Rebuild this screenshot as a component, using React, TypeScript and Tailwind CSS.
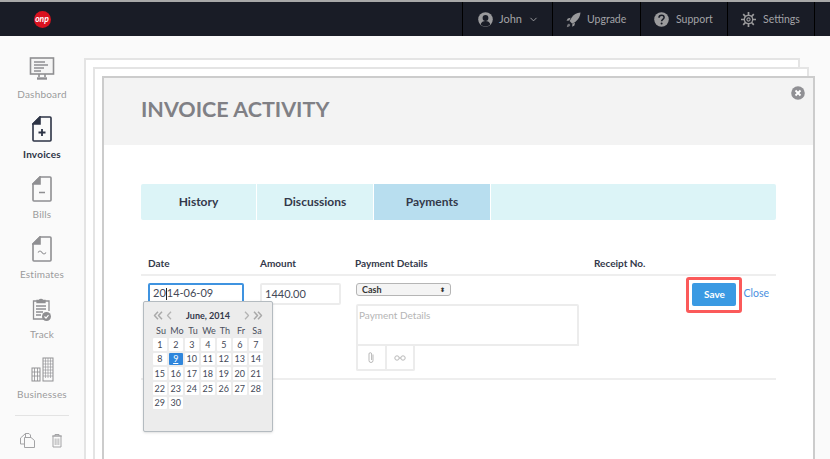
import React from "react";
import { ChevronDown } from "lucide-react";

const font = "font-['Lato','Open_Sans',sans-serif]";

const Gray = "#8f8f92";

const DashboardIcon = () => (
  <svg width="26" height="24" viewBox="0 0 26 24" fill="none" stroke={Gray} strokeWidth="1.6">
    <rect x="1.5" y="1" width="23" height="16" fill="#f5f5f5" />
    <path d="M5 5h11M5 8h14M5 11h10M5 14h7" strokeWidth="1.3" />
    <path d="M10 17v3M16 17v3" />
    <path d="M8 21.5h10" strokeWidth="2.4" />
  </svg>
);

const DocIcon = ({ color, sign }: { color: string; sign: "plus" | "minus" | "tilde" }) => (
  <svg width="20" height="26" viewBox="0 0 20 26" fill="none" stroke={color} strokeWidth="1.6">
    <path d="M8 1h10a1 1 0 0 1 1 1v22a1 1 0 0 1-1 1H2a1 1 0 0 1-1-1V8z" />
    <path d="M8 1v7H1z" fill={color} />
    {sign === "plus" && <path d="M10 13v7M6.500 16.500h7" strokeWidth="1.800" />}
    {sign === "minus" && <path d="M7 16.500h6" strokeWidth="1.500" />}
    {sign === "tilde" && <path d="M6 16.500c1.500-2 2.500-2 4 0s2.500 2 4 0" strokeWidth="1.100" />}
  </svg>
);

const TrackIcon = () => (
  <svg width="20" height="25" viewBox="0 0 20 25" fill="none" stroke={Gray} strokeWidth="1.300">
    <path d="M5 4H1.500v18h11" />
    <path d="M13 4h4v10" />
    <path d="M5 5.500V3.500h2.200a2 2 0 0 1 3.600 0H13v2z" fill={Gray} />
    <path d="M4 9h10M4 12h10M4 15h7M4 18h5" />
    <circle cx="14.500" cy="19.500" r="4.500" fill={Gray} stroke="none" />
    <path d="M12.500 19.500l1.500 1.600 2.500-3" stroke="#fff" strokeWidth="1.100" />
  </svg>
);

const BusinessIcon = () => (
  <svg width="23" height="25" viewBox="0 0 23 25" fill="none" stroke={Gray} strokeWidth="1">
    <rect x="1" y="11" width="8" height="13" />
    <path d="M3.500 11v13M6.500 11v13M1 15h8M1 19h8" strokeWidth="0.800" />
    <rect x="12" y="1" width="10" height="23" />
    <path d="M14.500 1v20M17 1v20M19.500 1v20M12 4h10M12 7h10M12 10h10M12 13h10M12 16h10M12 19h10" strokeWidth="0.600" />
  </svg>
);

const CopyIcon = () => (
  <svg width="15" height="15" viewBox="0 0 15 15" fill="none" stroke="#a3a3a5" strokeWidth="1">
    <path d="M5.500 4.500V.5H9l1.500 1.500v2.500" />
    <path d="M5.500.5L.5 5v6h4" />
    <path d="M4.500 4.500H11l3.500 3v7h-10z" fill="#fafafa" />
  </svg>
);

const TrashIcon = () => (
  <svg width="12" height="15" viewBox="0 0 12 15" fill="none" stroke="#a3a3a5" strokeWidth="1">
    <path d="M1 3h10M4 3V1.500h4V3" />
    <path d="M2 3v11h8V3z" />
    <path d="M4.200 5.500v6.500M6 5.500v6.500M7.800 5.500v6.500" strokeWidth="0.800" />
  </svg>
);

const UserIcon = () => (
  <svg width="15" height="15" viewBox="0 0 15 15">
    <circle cx="7.500" cy="7.500" r="7.300" fill="#9a9a9c" />
    <circle cx="7.500" cy="6" r="2.900" fill="#191c26" />
    <path d="M2.600 12.600c.6-2.600 2.600-3.600 4.900-3.600s4.300 1 4.900 3.600a7 7 0 0 1-9.800 0z" fill="#191c26" />
  </svg>
);

const RocketIcon = () => (
  <svg width="15" height="16" viewBox="0 0 15 16" fill="#9a9a9c">
    <path d="M14.500.5c-4 .3-6.800 2-9 5.200L3.600 9l2.600 2.700 3.300-2c3-2.300 4.700-5.200 5-9.200z" />
    <path d="M4.700 5.800L1.800 6.500.5 8.700l2.700-.2zM9 10.500l-.6 2.900-2.200 1.300.2-2.700z" />
    <path d="M3 11.500l-1.700 1.300-.5 2.400 2.400-.6 1.200-1.700z" opacity="0.700" />
  </svg>
);

const HelpIcon = () => (
  <svg width="15" height="15" viewBox="0 0 15 15">
    <circle cx="7.500" cy="7.500" r="7.300" fill="#9a9a9c" />
    <path d="M5 5.800c0-1.600 1.100-2.500 2.600-2.500s2.500.9 2.500 2.200c0 1.900-2.500 1.900-2.500 3.700" fill="none" stroke="#191c26" strokeWidth="1.500" />
    <circle cx="7.600" cy="11.400" r="1" fill="#191c26" />
  </svg>
);

const GearIcon = () => (
  <svg width="15" height="15" viewBox="0 0 15 15" fill="none" stroke="#9a9a9c">
    <circle cx="7.500" cy="7.500" r="4.200" strokeWidth="1.300" />
    <circle cx="7.500" cy="7.500" r="1.600" strokeWidth="1.100" />
    <path d="M7.500 0v3M7.500 12v3M0 7.500h3M12 7.500h3M2.200 2.200l2.100 2.100M10.700 10.700l2.100 2.100M12.800 2.200l-2.100 2.100M4.300 10.700l-2.100 2.100" strokeWidth="1.700" />
  </svg>
);

const PagerArrows = ({ dir }: { dir: "left" | "right" }) => (
  <svg width="20" height="9" viewBox="0 0 20 9" fill="none" strokeWidth="1.300" strokeLinejoin="round">
    {dir === "left" ? (
      <>
        <path d="M5 .8L1.500 4.500 5 8.200" stroke="#a9a9a9" strokeWidth="1.500" />
        <path d="M9 .8L5.500 4.500 9 8.200" stroke="#a9a9a9" strokeWidth="1.500" />
        <path d="M18 .8l-3.500 3.700L18 8.200" stroke="#b4b4b4" />
      </>
    ) : (
      <>
        <path d="M2 .8l3.500 3.700L2 8.200" stroke="#b4b4b4" />
        <path d="M11 .8l3.500 3.700L11 8.200" stroke="#a9a9a9" strokeWidth="1.500" />
        <path d="M15 .8l3.500 3.700L15 8.200" stroke="#a9a9a9" strokeWidth="1.500" />
      </>
    )}
  </svg>
);

const sideItems = [
  { label: "Dashboard", icon: <DashboardIcon /> },
  { label: "Invoices", icon: <DocIcon color="#2c3345" sign="plus" />, active: true },
  { label: "Bills", icon: <DocIcon color={Gray} sign="minus" /> },
  { label: "Estimates", icon: <DocIcon color={Gray} sign="tilde" /> },
  { label: "Track", icon: <TrackIcon /> },
  { label: "Businesses", icon: <BusinessIcon /> },
];

const days = Array.from({ length: 30 }, (_, i) => i + 1);

const DatePicker = () => (
  <div className="absolute left-[-5px] top-[18px] h-[131px] w-[130px] rounded-[2px] border border-[#b4bbc0] bg-[#ececec] px-[9px] pt-[5px] shadow-sm">
    <div className="flex h-[17px] items-center justify-between text-[#a9a9a9]">
      <PagerArrows dir="left" />
      <span className="text-[9px] font-bold text-[#33384a]">June, 2014</span>
      <PagerArrows dir="right" />
    </div>
    <div className="grid grid-cols-[repeat(7,16px)] text-center text-[9px] leading-[13px] text-[#4a4f5c]">
      {["Su", "Mo", "Tu", "We", "Th", "Fr", "Sa"].map((d) => (
        <span key={d}>{d}</span>
      ))}
    </div>
    <div className="mt-[1px] grid grid-cols-[repeat(7,16px)] auto-rows-[14.7px] text-center text-[9px]">
      {days.map((d) => (
        <span
          key={d}
          className={`flex h-[12.5px] w-[13.5px] items-center justify-center rounded-[1px] ${
            d === 9 ? "bg-[#2f86dc] text-white underline" : "bg-white text-[#444957]"
          }`}
        >
          {d}
        </span>
      ))}
    </div>
  </div>
);

export default function App() {
  return (
    <div className={`flex h-[459px] w-[830px] flex-col overflow-hidden bg-white ${font}`}>
      <header className="flex h-[36px] shrink-0 justify-end border-t-2 border-[#a8a8a8] bg-[#191c26] pr-[15px] text-[10.5px] text-[#a3a3a6]">
        <div className="mr-auto flex w-[84px] items-center justify-center">
          <div className="flex h-[17px] w-[17px] items-center justify-center rounded-full bg-[#d9121f] text-[8.5px] font-bold italic leading-none text-white">
            onp
          </div>
        </div>
        <div className="flex w-[90px] items-center gap-[6px] border-l border-black pl-[15px] pt-px">
          <UserIcon />
          <span className="text-[11px]">John</span>
          <ChevronDown size={11} />
        </div>
        <div className="flex w-[88px] items-center gap-[6px] border-l border-black pl-[13px] pt-px">
          <RocketIcon />
          <span>Upgrade</span>
        </div>
        <div className="flex w-[87px] items-center gap-[7px] border-l border-black pl-[13px] pt-px">
          <HelpIcon />
          <span>Support</span>
        </div>
        <div className="flex w-[88px] items-center gap-[7px] border-x border-black pl-[13px] pt-px">
          <GearIcon />
          <span>Settings</span>
        </div>
      </header>

      <div className="flex min-h-0 flex-1">
        <aside className="flex w-[84px] shrink-0 flex-col items-center bg-[#fafafa] pt-[20px]">
          {sideItems.map((item) => (
            <div key={item.label} className="flex h-[60px] w-full flex-col items-center">
              <div className="flex h-[26px] items-center justify-center">{item.icon}</div>
              <span
                className={`mt-[5px] text-[10px] leading-[14px] tracking-[0.2px] ${
                  item.active ? "font-bold text-[#2c3345]" : "text-[#9a9a9c]"
                }`}
              >
                {item.label}
              </span>
            </div>
          ))}
          <div className="mt-[-1px] h-px w-[54px] bg-[#e3e3e3]" />
          <div className="mt-[17px] flex items-center gap-[16px] pr-[2px]">
            <CopyIcon />
            <TrashIcon />
          </div>
        </aside>

        <main className="min-w-0 flex-1 bg-[#fafafa] pt-[22px]">
          <div className="h-[500px] w-[716px] border-2 border-[#e4e4e4] bg-white pl-[7px] pt-[7px]">
            <div className="h-[500px] w-[716px] border-2 border-[#e4e4e4] bg-white pl-[7px] pt-[7px]">
              <section className="relative h-[500px] w-[713px] border-2 border-[#cccccc] bg-white">
                <div className="relative flex h-[67px] items-center bg-[#f3f3f3] pb-[4px] pl-[37px]">
                  <h1 className="text-[21.5px] font-bold text-[#808085]">INVOICE ACTIVITY</h1>
                  <svg className="absolute right-[8px] top-[8px]" width="14" height="14" viewBox="0 0 14 14">
                    <circle cx="7" cy="7" r="6.800" fill="#909094" />
                    <path d="M4.500 4.500l5 5M9.500 4.500l-5 5" stroke="#fff" strokeWidth="1.800" />
                  </svg>
                </div>

                <div className="px-[37px] pt-[39px]">
                  <nav className="flex h-[36px] gap-px text-[12px] font-bold text-[#33384a]">
                    <div className="flex w-[115px] items-center justify-center rounded-l-[2px] bg-[#dcf4f7]">History</div>
                    <div className="flex w-[116px] items-center justify-center bg-[#dcf4f7]">Discussions</div>
                    <div className="flex w-[116px] items-center justify-center bg-[#b8deef]">Payments</div>
                    <div className="flex-1 rounded-r-[2px] bg-[#dcf4f7]" />
                  </nav>

                  <div className="mt-[35px] flex h-[21px] border-b-2 border-[#eeeeee] pl-[7px] text-[10px] font-bold leading-[16px] text-[#33384a]">
                    <span className="w-[112px]">Date</span>
                    <span className="w-[95px]">Amount</span>
                    <span className="w-[239px]">Payment Details</span>
                    <span>Receipt No.</span>
                  </div>

                  <div className="flex h-[104px] border-b-2 border-[#eeeeee] pl-[7px] pt-[7px]">
                    <div className="relative w-[112px]">
                      <div className="flex h-[21px] w-[96px] items-center rounded-[2px] border-2 border-[#3f93e0] pl-[3px] text-[11px] text-[#444957]">
                        20<span className="h-[12px] w-px bg-[#222]" />14-06-09
                      </div>
                      <DatePicker />
                    </div>
                    <div className="w-[95px]">
                      <div className="flex h-[22px] w-[81px] items-center rounded-[2px] border-2 border-[#ececec] pl-[3px] text-[11px] text-[#444957]">
                        1440.00
                      </div>
                    </div>
                    <div className="w-[237px] pl-px">
                      <div className="flex h-[13px] w-[95px] items-center justify-between rounded-[3px] border border-[#b5b5b5] bg-[#f4f4f4] px-[5px] text-[9px] font-bold leading-none text-[#333]">
                        <span>Cash</span>
                        <span className="text-[6px] leading-none">⬍</span>
                      </div>
                      <div className="mt-[8px] h-[42px] w-[223px] rounded-t-[2px] border-2 border-[#ececec] pl-[1px] pt-[2px] text-[10px] text-[#b5b5b5]">
                        Payment Details
                      </div>
                      <div className="flex h-[25px] w-[59px] rounded-b-[2px] border-2 border-t-0 border-[#ececec]">
                        <div className="flex flex-1 items-center justify-center border-r-2 border-[#ececec]">
                          <svg width="8" height="13" viewBox="0 0 8 13" fill="none" stroke="#b9b9b9">
                            <path d="M6 3.500v6a2 2 0 0 1-4 0V3a1.300 1.300 0 0 1 2.600 0v6" />
                          </svg>
                        </div>
                        <div className="flex flex-1 items-center justify-center">
                          <svg width="12" height="6" viewBox="0 0 12 6" fill="none" stroke="#b9b9b9">
                            <circle cx="3" cy="3" r="2.200" />
                            <circle cx="9" cy="3" r="2.200" />
                            <path d="M5 3h2" />
                          </svg>
                        </div>
                      </div>
                    </div>
                    <div className="ml-auto flex items-start gap-[7px] pr-[7px]">
                      <div className="relative">
                        <button className="block h-[23px] w-[44px] rounded-[2px] bg-[#3a9ae3] text-[10px] font-bold text-white">
                          Save
                        </button>
                        <div className="absolute inset-x-[-6px] bottom-[-7px] top-[-6px] rounded-[3px] border-[3px] border-[#fb5a5a]" />
                      </div>
                      <span className="pt-[3px] text-[10.5px] leading-[15px] text-[#4a8fe0]">Close</span>
                    </div>
                  </div>
                </div>
              </section>
            </div>
          </div>
        </main>
      </div>
    </div>
  );
}
